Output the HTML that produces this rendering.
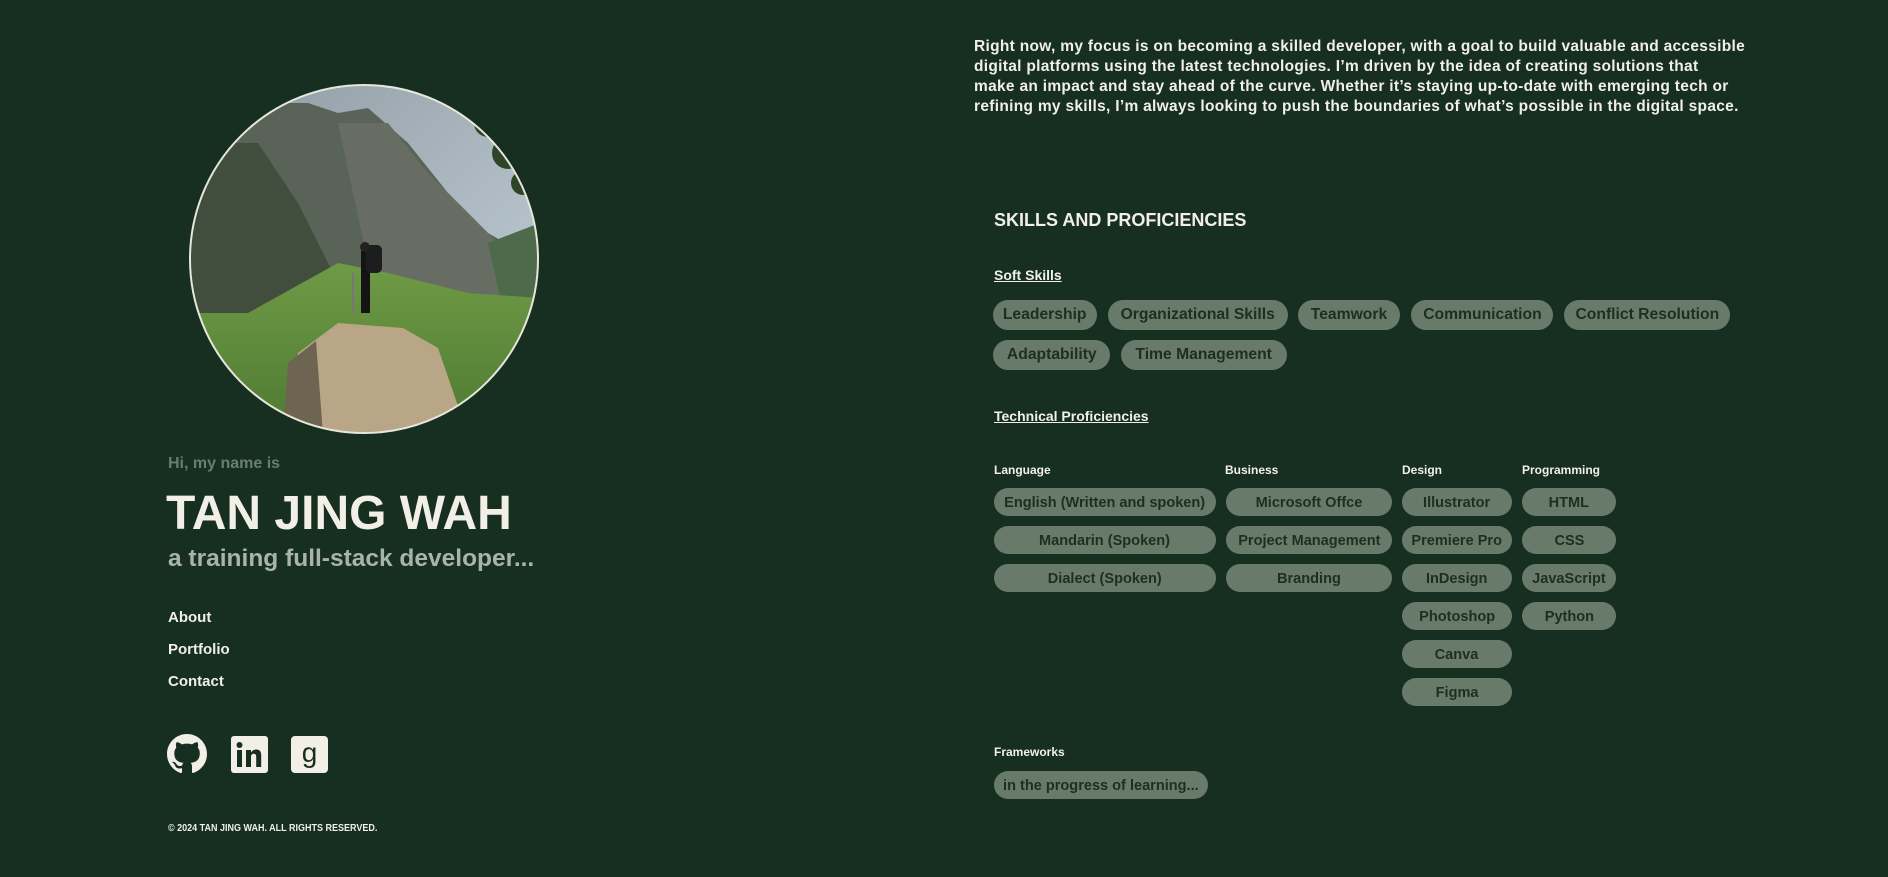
<!DOCTYPE html>
<html><head><meta charset="utf-8"><style>
*{margin:0;padding:0;box-sizing:border-box}
body{width:1888px;height:877px;background:#162f20;font-family:"Liberation Sans",sans-serif;font-weight:bold;color:#f1efe6;position:relative;overflow:hidden}
.a{position:absolute;white-space:nowrap}
.s{display:inline-block;transform-origin:left center}
.pill{position:absolute;background:#687b6b;color:#1c2f21;border-radius:14px;display:flex;align-items:center;justify-content:center;white-space:nowrap}
.pill span{display:inline-block;transform-origin:center}
.p1{height:30px;border-radius:15px;font-size:16px}
.p1 span{transform:scaleX(.98)}
.p2{height:28px;font-size:15px}
.p2 span{transform:scaleX(.97)}
.h{font-size:12px}
</style></head><body>

<svg class="a" style="left:188px;top:83px" width="352" height="352" viewBox="0 0 352 352">
<defs><clipPath id="c"><circle cx="176" cy="176" r="174"/></clipPath>
<linearGradient id="sky" x1="0" y1="0" x2="1" y2="1"><stop offset="0" stop-color="#8e9aa0"/><stop offset="1" stop-color="#c4d2dc"/></linearGradient>
<linearGradient id="gr" x1="0" y1="0" x2="0" y2="1"><stop offset="0" stop-color="#6f9a45"/><stop offset="1" stop-color="#4e7a33"/></linearGradient></defs>
<g clip-path="url(#c)">
<rect width="352" height="352" fill="url(#sky)"/>
<polygon points="0,40 80,20 120,20 150,30 180,25 220,60 260,110 300,150 352,180 352,300 0,300" fill="#5a6358"/>
<polygon points="0,60 70,60 110,120 150,200 160,260 0,300" fill="#414d3d"/>
<polygon points="150,40 200,40 240,90 280,130 320,170 352,190 352,280 200,270 180,180" fill="#676d62"/>
<polygon points="300,160 352,140 352,260 320,250" fill="#4d6a4a"/>
<polygon points="0,230 60,230 150,180 200,190 280,210 352,215 352,352 0,352" fill="url(#gr)"/>
<polygon points="110,270 150,240 215,245 250,265 280,352 100,352" fill="#b8a686"/>
<polygon points="100,280 128,258 135,352 95,352" fill="#6e6452"/>
<g fill="#2f4528"><circle cx="300" cy="40" r="14"/><circle cx="320" cy="70" r="16"/><circle cx="335" cy="100" r="12"/><circle cx="290" cy="20" r="10"/></g>
<rect x="173" y="168" width="9" height="62" fill="#141414"/>
<rect x="178" y="162" width="16" height="28" rx="5" fill="#1d1d1d"/>
<circle cx="177" cy="164" r="5" fill="#222"/>
<line x1="165" y1="190" x2="165" y2="232" stroke="#777" stroke-width="2"/>
</g>
<circle cx="176" cy="176" r="174" fill="none" stroke="#e6e6da" stroke-width="2"/>
</svg>

<div class="a" style="left:168px;top:455px;font-size:16px;color:#6b7d6c">Hi, my name is</div>
<div class="a" style="left:166px;top:486px;font-size:48px;line-height:56px;color:#f1efe6">TAN JING WAH</div>
<div class="a" style="left:168px;top:545px;font-size:24.5px;color:#a8b4a6">a training full-stack developer...</div>
<div class="a" style="left:168px;top:609px;font-size:15px">About</div>
<div class="a" style="left:168px;top:641px;font-size:15px">Portfolio</div>
<div class="a" style="left:168px;top:673px;font-size:15px">Contact</div>

<svg class="a" style="left:167px;top:734px" width="40" height="40" viewBox="0 0 16 16"><path fill="#f1efe6" d="M8 0C3.58 0 0 3.58 0 8c0 3.540 2.29 6.53 5.47 7.59.4.07.55-.17.55-.38 0-.19-.01-.82-.01-1.49-2.01.37-2.530-.49-2.690-.94-.09-.23-.48-.94-.82-1.130-.28-.15-.68-.52-.01-.53.63-.01 1.080.58 1.230.82.72 1.210 1.870.87 2.330.66.07-.52.28-.87.51-1.070-1.78-.2-3.640-.89-3.640-3.95 0-.87.31-1.59.82-2.15-.08-.2-.36-1.02.08-2.12 0 0 .67-.21 2.200.82.64-.18 1.32-.27 2-.27.68 0 1.36.09 2 .27 1.53-1.04 2.2-.82 2.2-.82.44 1.1.16 1.92.08 2.12.51.56.82 1.27.82 2.15 0 3.07-1.87 3.75-3.65 3.95.29.25.54.73.54 1.48 0 1.07-.01 1.93-.01 2.2 0 .21.15.46.55.38A8.013 8.013 0 0016 8c0-4.42-3.58-8-8-8z"/></svg>
<svg class="a" style="left:231px;top:736px" width="37" height="37" viewBox="0 0 37 37"><rect width="37" height="37" rx="3" fill="#f1efe6"/><rect x="6" y="14" width="5" height="17" fill="#162f20"/><circle cx="8.5" cy="9" r="3" fill="#162f20"/><path d="M15 14h5v2.5c1-1.8 3-3 5.2-3 4 0 5 2.6 5 6V31h-5v-10c0-2-.6-3.2-2.4-3.2S20 19 20 21v10h-5z" fill="#162f20"/></svg>
<svg class="a" style="left:291px;top:736px" width="37" height="37" viewBox="0 0 37 37"><rect width="37" height="37" rx="4" fill="#f1efe6"/><text x="18.5" y="26" text-anchor="middle" font-family="Liberation Sans, sans-serif" font-weight="normal" font-size="28" fill="#162f20">g</text></svg>

<div class="a" style="left:168px;top:823px;font-size:10px"><span class="s" style="transform:scaleX(.9)">© 2024 TAN JING WAH. ALL RIGHTS RESERVED.</span></div>

<div class="a" style="left:974px;top:37px;font-size:15.5px;line-height:20px;letter-spacing:.3px">
<div>Right now, my focus is on becoming a skilled developer, with a goal to build valuable and accessible</div>
<div>digital platforms using the latest technologies. I’m driven by the idea of creating solutions that</div>
<div>make an impact and stay ahead of the curve. Whether it’s staying up-to-date with emerging tech or</div>
<div>refining my skills, I’m always looking to push the boundaries of what’s possible in the digital space.</div>
</div>

<div class="a" style="left:994px;top:210px;font-size:18px">SKILLS AND PROFICIENCIES</div>
<div class="a" style="left:994px;top:267px;font-size:14px;text-decoration:underline">Soft Skills</div>

<div class="pill p1" style="left:993px;top:300px;width:104px"><span>Leadership</span></div>
<div class="pill p1" style="left:1108px;top:300px;width:180px"><span>Organizational Skills</span></div>
<div class="pill p1" style="left:1298px;top:300px;width:102px"><span>Teamwork</span></div>
<div class="pill p1" style="left:1411px;top:300px;width:142px"><span>Communication</span></div>
<div class="pill p1" style="left:1564px;top:300px;width:166px"><span>Conflict Resolution</span></div>
<div class="pill p1" style="left:993px;top:340px;width:117px"><span>Adaptability</span></div>
<div class="pill p1" style="left:1121px;top:340px;width:166px"><span>Time Management</span></div>

<div class="a" style="left:994px;top:408px;font-size:14px;text-decoration:underline">Technical Proficiencies</div>

<div class="a h" style="left:994px;top:463px">Language</div>
<div class="a h" style="left:1225px;top:463px">Business</div>
<div class="a h" style="left:1402px;top:463px">Design</div>
<div class="a h" style="left:1522px;top:463px">Programming</div>

<div class="pill p2" style="left:994px;top:488px;width:222px"><span>English (Written and spoken)</span></div>
<div class="pill p2" style="left:994px;top:526px;width:222px"><span>Mandarin (Spoken)</span></div>
<div class="pill p2" style="left:994px;top:564px;width:222px"><span>Dialect (Spoken)</span></div>

<div class="pill p2" style="left:1226px;top:488px;width:166px"><span>Microsoft Offce</span></div>
<div class="pill p2" style="left:1226px;top:526px;width:166px"><span>Project Management</span></div>
<div class="pill p2" style="left:1226px;top:564px;width:166px"><span>Branding</span></div>

<div class="pill p2" style="left:1402px;top:488px;width:110px"><span>Illustrator</span></div>
<div class="pill p2" style="left:1402px;top:526px;width:110px"><span>Premiere Pro</span></div>
<div class="pill p2" style="left:1402px;top:564px;width:110px"><span>InDesign</span></div>
<div class="pill p2" style="left:1402px;top:602px;width:110px"><span>Photoshop</span></div>
<div class="pill p2" style="left:1402px;top:640px;width:110px"><span>Canva</span></div>
<div class="pill p2" style="left:1402px;top:678px;width:110px"><span>Figma</span></div>

<div class="pill p2" style="left:1522px;top:488px;width:94px"><span>HTML</span></div>
<div class="pill p2" style="left:1522px;top:526px;width:94px"><span>CSS</span></div>
<div class="pill p2" style="left:1522px;top:564px;width:94px"><span>JavaScript</span></div>
<div class="pill p2" style="left:1522px;top:602px;width:94px"><span>Python</span></div>

<div class="a h" style="left:994px;top:745px">Frameworks</div>
<div class="pill p2" style="left:994px;top:771px;width:214px"><span>in the progress of learning...</span></div>

</body></html>
